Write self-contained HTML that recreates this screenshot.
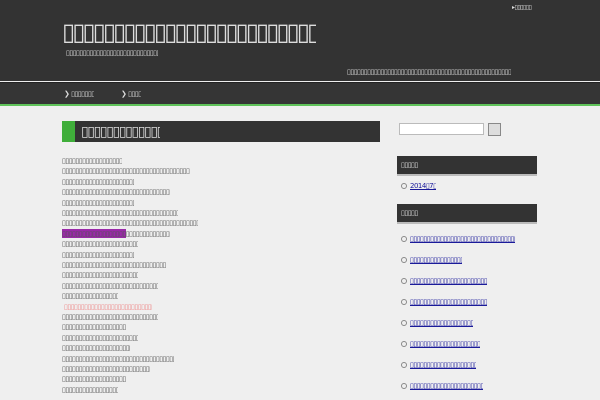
<!DOCTYPE html><html><head><meta charset="utf-8"><style>
body{margin:0;width:600px;height:400px;overflow:hidden;background:#efefef;font-family:"DejaVu Sans",sans-serif;position:relative}
.t{position:absolute;overflow:hidden;white-space:nowrap;font-size:7px;line-height:8px;color:#555;letter-spacing:-0.5px}
#hd{position:absolute;left:0;top:0;width:600px;height:81px;background:#333}
#nv{position:absolute;left:0;top:82px;width:600px;height:22px;background:#353535;border-top:1px solid #222}
#gl{position:absolute;left:0;top:104px;width:600px;height:2px;background:#5fc35a}
.h{position:absolute;background:#333}
.lk{color:#1a1a9a;text-decoration:underline}
.bul{position:absolute;width:4px;height:4px;border:1.5px solid #888;border-radius:50%}
</style></head><body>
<div id="hd"></div><div id="nv"></div><div id="gl"></div>
<div class="t" style="left:512px;top:4px;width:28px;color:#ddd;font-size:6px">▸▯▯▯▯▯▯</div>
<div class="t" style="left:62px;top:19px;width:254px;height:26px;font-size:24px;line-height:26px;color:#ddd;letter-spacing:-3px">▯▯▯▯▯▯▯▯▯▯▯▯▯▯▯▯▯▯▯▯▯▯▯▯▯▯▯▯▯▯▯▯▯▯▯▯▯</div>
<div class="t" style="left:66px;top:49px;width:92px;color:#ddd">▯▯▯▯▯▯▯▯▯▯▯▯▯▯▯▯▯▯▯▯▯▯▯▯▯▯▯▯</div>
<div class="t" style="left:347px;top:68px;width:164px;color:#ddd">▯▯▯▯▯▯▯▯▯▯▯▯▯▯▯▯▯▯▯▯▯▯▯▯▯▯▯▯▯▯▯▯▯▯▯▯▯▯▯▯▯▯▯▯▯▯▯▯▯▯</div>
<div class="t" style="left:64px;top:90px;width:30px;color:#ddd">❯ ▯▯▯▯▯▯▯▯</div>
<div class="t" style="left:121px;top:90px;width:20px;color:#ddd">❯ ▯▯▯▯▯▯</div>
<div class="h" style="left:62px;top:121px;width:318px;height:21px"></div>
<div style="position:absolute;left:62px;top:121px;width:13px;height:21px;background:#3fae3a"></div>
<div class="t" style="left:81px;top:124px;width:79px;height:16px;font-size:14px;line-height:16px;color:#ddd;letter-spacing:-1.4px">▯▯▯▯▯▯▯▯▯▯▯▯▯▯▯▯▯▯</div>
<div id="body"></div>
<div style="position:absolute;left:399px;top:123px;width:83px;height:10px;background:#fff;border:1px solid #bbb"></div>
<div style="position:absolute;left:488px;top:123px;width:11px;height:11px;background:#ddd;border:1px solid #888"></div>
<div class="h" style="left:397px;top:156px;width:140px;height:18px;box-shadow:0 2px 0 #bbb"></div>
<div class="t" style="left:401px;top:161px;width:17px;color:#ddd">▯▯▯▯▯▯</div>
<div class="bul" style="left:401px;top:183px"></div>
<div class="t" style="left:410px;top:182px;width:26px" ><span class="lk">2014▯7▯</span></div>
<div class="h" style="left:397px;top:204px;width:140px;height:18px;box-shadow:0 2px 0 #bbb"></div>
<div class="t" style="left:401px;top:209px;width:17px;color:#ddd">▯▯▯▯▯▯</div>
<div id="side"></div>
<script>
var W=[60,128,72,108,72,116,136,108,76,72,104,76,96,56,88,96,64,76,68,112,88,64,56],h='';
var s='▯'.repeat(60);
W.forEach(function(w,i){var y=157+i*10.4;var st='';var x=62;
if(i==14){st='color:#e88;';x=64}
if(i==7){h+='<div style="position:absolute;left:62px;top:'+(y-1)+'px;width:64px;height:9px;background:#9a2aa8"></div>'}
h+='<div class="t" style="left:'+x+'px;top:'+y+'px;width:'+w+'px;'+st+'">'+s+'</div>'});
document.getElementById('body').innerHTML=h;
var S=[105,52,77,77,63,70,66,73],g='';
S.forEach(function(w,i){var y=235+i*21;g+='<div class="bul" style="left:401px;top:'+(y+1)+'px"></div><div class="t" style="left:410px;top:'+y+'px;width:'+w+'px;height:9px"><span class="lk">'+s+'</span></div>'});
document.getElementById('side').innerHTML=g;
</script>
</body></html>
